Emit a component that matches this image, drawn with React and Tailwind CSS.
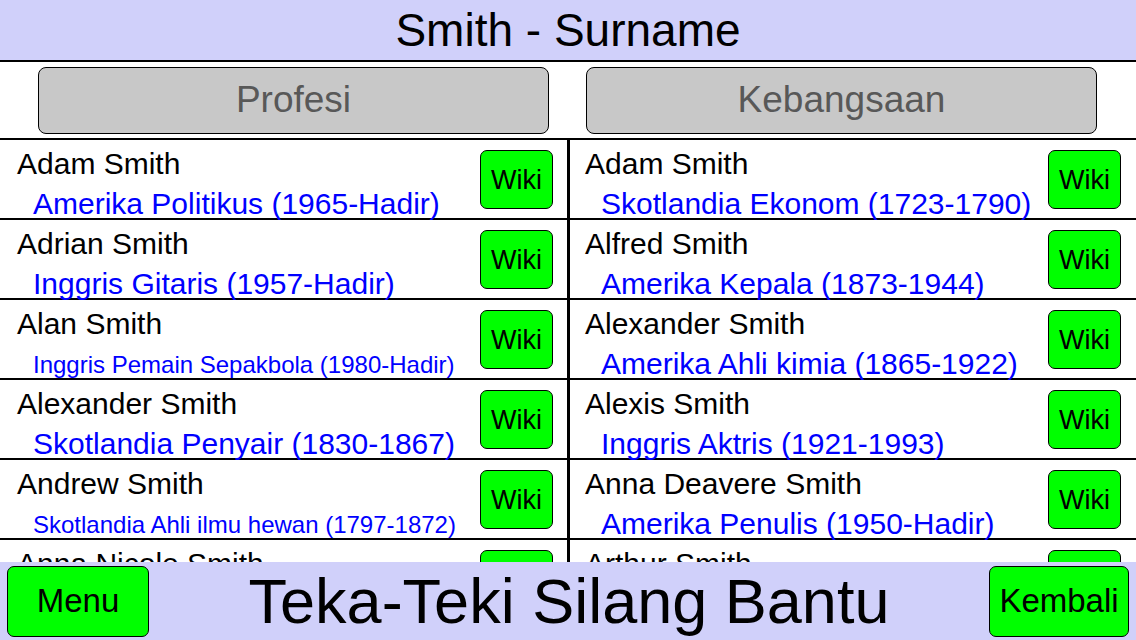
const leftRows = [
  { name: 'Adam Smith', info: 'Amerika Politikus (1965-Hadir)' },
  { name: 'Adrian Smith', info: 'Inggris Gitaris (1957-Hadir)' },
  { name: 'Alan Smith', info: 'Inggris Pemain Sepakbola (1980-Hadir)', small: true },
  { name: 'Alexander Smith', info: 'Skotlandia Penyair (1830-1867)' },
  { name: 'Andrew Smith', info: 'Skotlandia Ahli ilmu hewan (1797-1872)', small: true },
  { name: 'Anna Nicole Smith', info: 'Amerika Model (1967-2007)' },
];

const rightRows = [
  { name: 'Adam Smith', info: 'Skotlandia Ekonom (1723-1790)' },
  { name: 'Alfred Smith', info: 'Amerika Kepala (1873-1944)' },
  { name: 'Alexander Smith', info: 'Amerika Ahli kimia (1865-1922)' },
  { name: 'Alexis Smith', info: 'Inggris Aktris (1921-1993)' },
  { name: 'Anna Deavere Smith', info: 'Amerika Penulis (1950-Hadir)' },
  { name: 'Arthur Smith', info: 'Amerika Komedian (1954-Hadir)' },
];

function PersonRow({ person, left }) {
  return (
    <div className={`flex items-center h-[80px] shrink-0 border-b-2 border-black ${left ? 'pl-[17px] pr-[14px]' : 'pl-[15px] pr-[15px]'}`}>
      <div className="flex-1 self-start pt-[9px] min-w-0">
        <div className="text-[30px] leading-none text-black whitespace-nowrap">{person.name}</div>
        <div
          className={`mt-[10px] h-[30px] pl-[16px] text-[#0000ff] whitespace-nowrap ${
            person.small ? 'text-[24px] leading-[32px]' : 'text-[30px] leading-none'
          }`}
        >
          {person.info}
        </div>
      </div>
      <button className="w-[73px] h-[59px] shrink-0 rounded-[7px] border-[1.5px] border-black bg-[#00ff00] text-[27px] leading-none pt-[3px] text-black">
        Wiki
      </button>
    </div>
  );
}

export default function App() {
  return (
    <div
      className="w-[1136px] h-[640px] flex flex-col bg-white overflow-hidden"
      style={{ fontFamily: '"Liberation Sans", Arial, sans-serif' }}
    >
      <div className="h-[62px] shrink-0 bg-[#d0d0fa] border-b-2 border-black flex items-center justify-center">
        <h1 className="text-[46px] leading-none text-black">Smith - Surname</h1>
      </div>

      <div className="h-[78px] shrink-0 border-b-2 border-black flex items-center pl-[38px] gap-[37px]">
        <button className="w-[511px] h-[67px] rounded-[8px] border-[1.5px] border-black bg-[#c8c8c8] text-[37px] text-[#585858]">
          Profesi
        </button>
        <button className="w-[511px] h-[67px] rounded-[8px] border-[1.5px] border-black bg-[#c8c8c8] text-[37px] text-[#585858]">
          Kebangsaan
        </button>
      </div>

      <div className="flex-1 min-h-0 overflow-hidden grid grid-cols-[567px_1fr]">
        <div className="flex flex-col">
          {leftRows.map((p, i) => (
            <PersonRow key={i} person={p} left />
          ))}
        </div>
        <div className="flex flex-col border-l-[3px] border-black">
          {rightRows.map((p, i) => (
            <PersonRow key={i} person={p} />
          ))}
        </div>
      </div>

      <div className="h-[78px] shrink-0 bg-[#d0d0fa] flex items-center px-[7px]">
        <button className="w-[142px] h-[71px] rounded-[7px] border-[1.5px] border-black bg-[#00ff00] text-[33px] text-black">
          Menu
        </button>
        <div className="flex-1 text-center text-[63px] leading-none text-black">Teka-Teki Silang Bantu</div>
        <button className="w-[140px] h-[71px] rounded-[7px] border-[1.5px] border-black bg-[#00ff00] text-[33px] text-black">
          Kembali
        </button>
      </div>
    </div>
  );
}
